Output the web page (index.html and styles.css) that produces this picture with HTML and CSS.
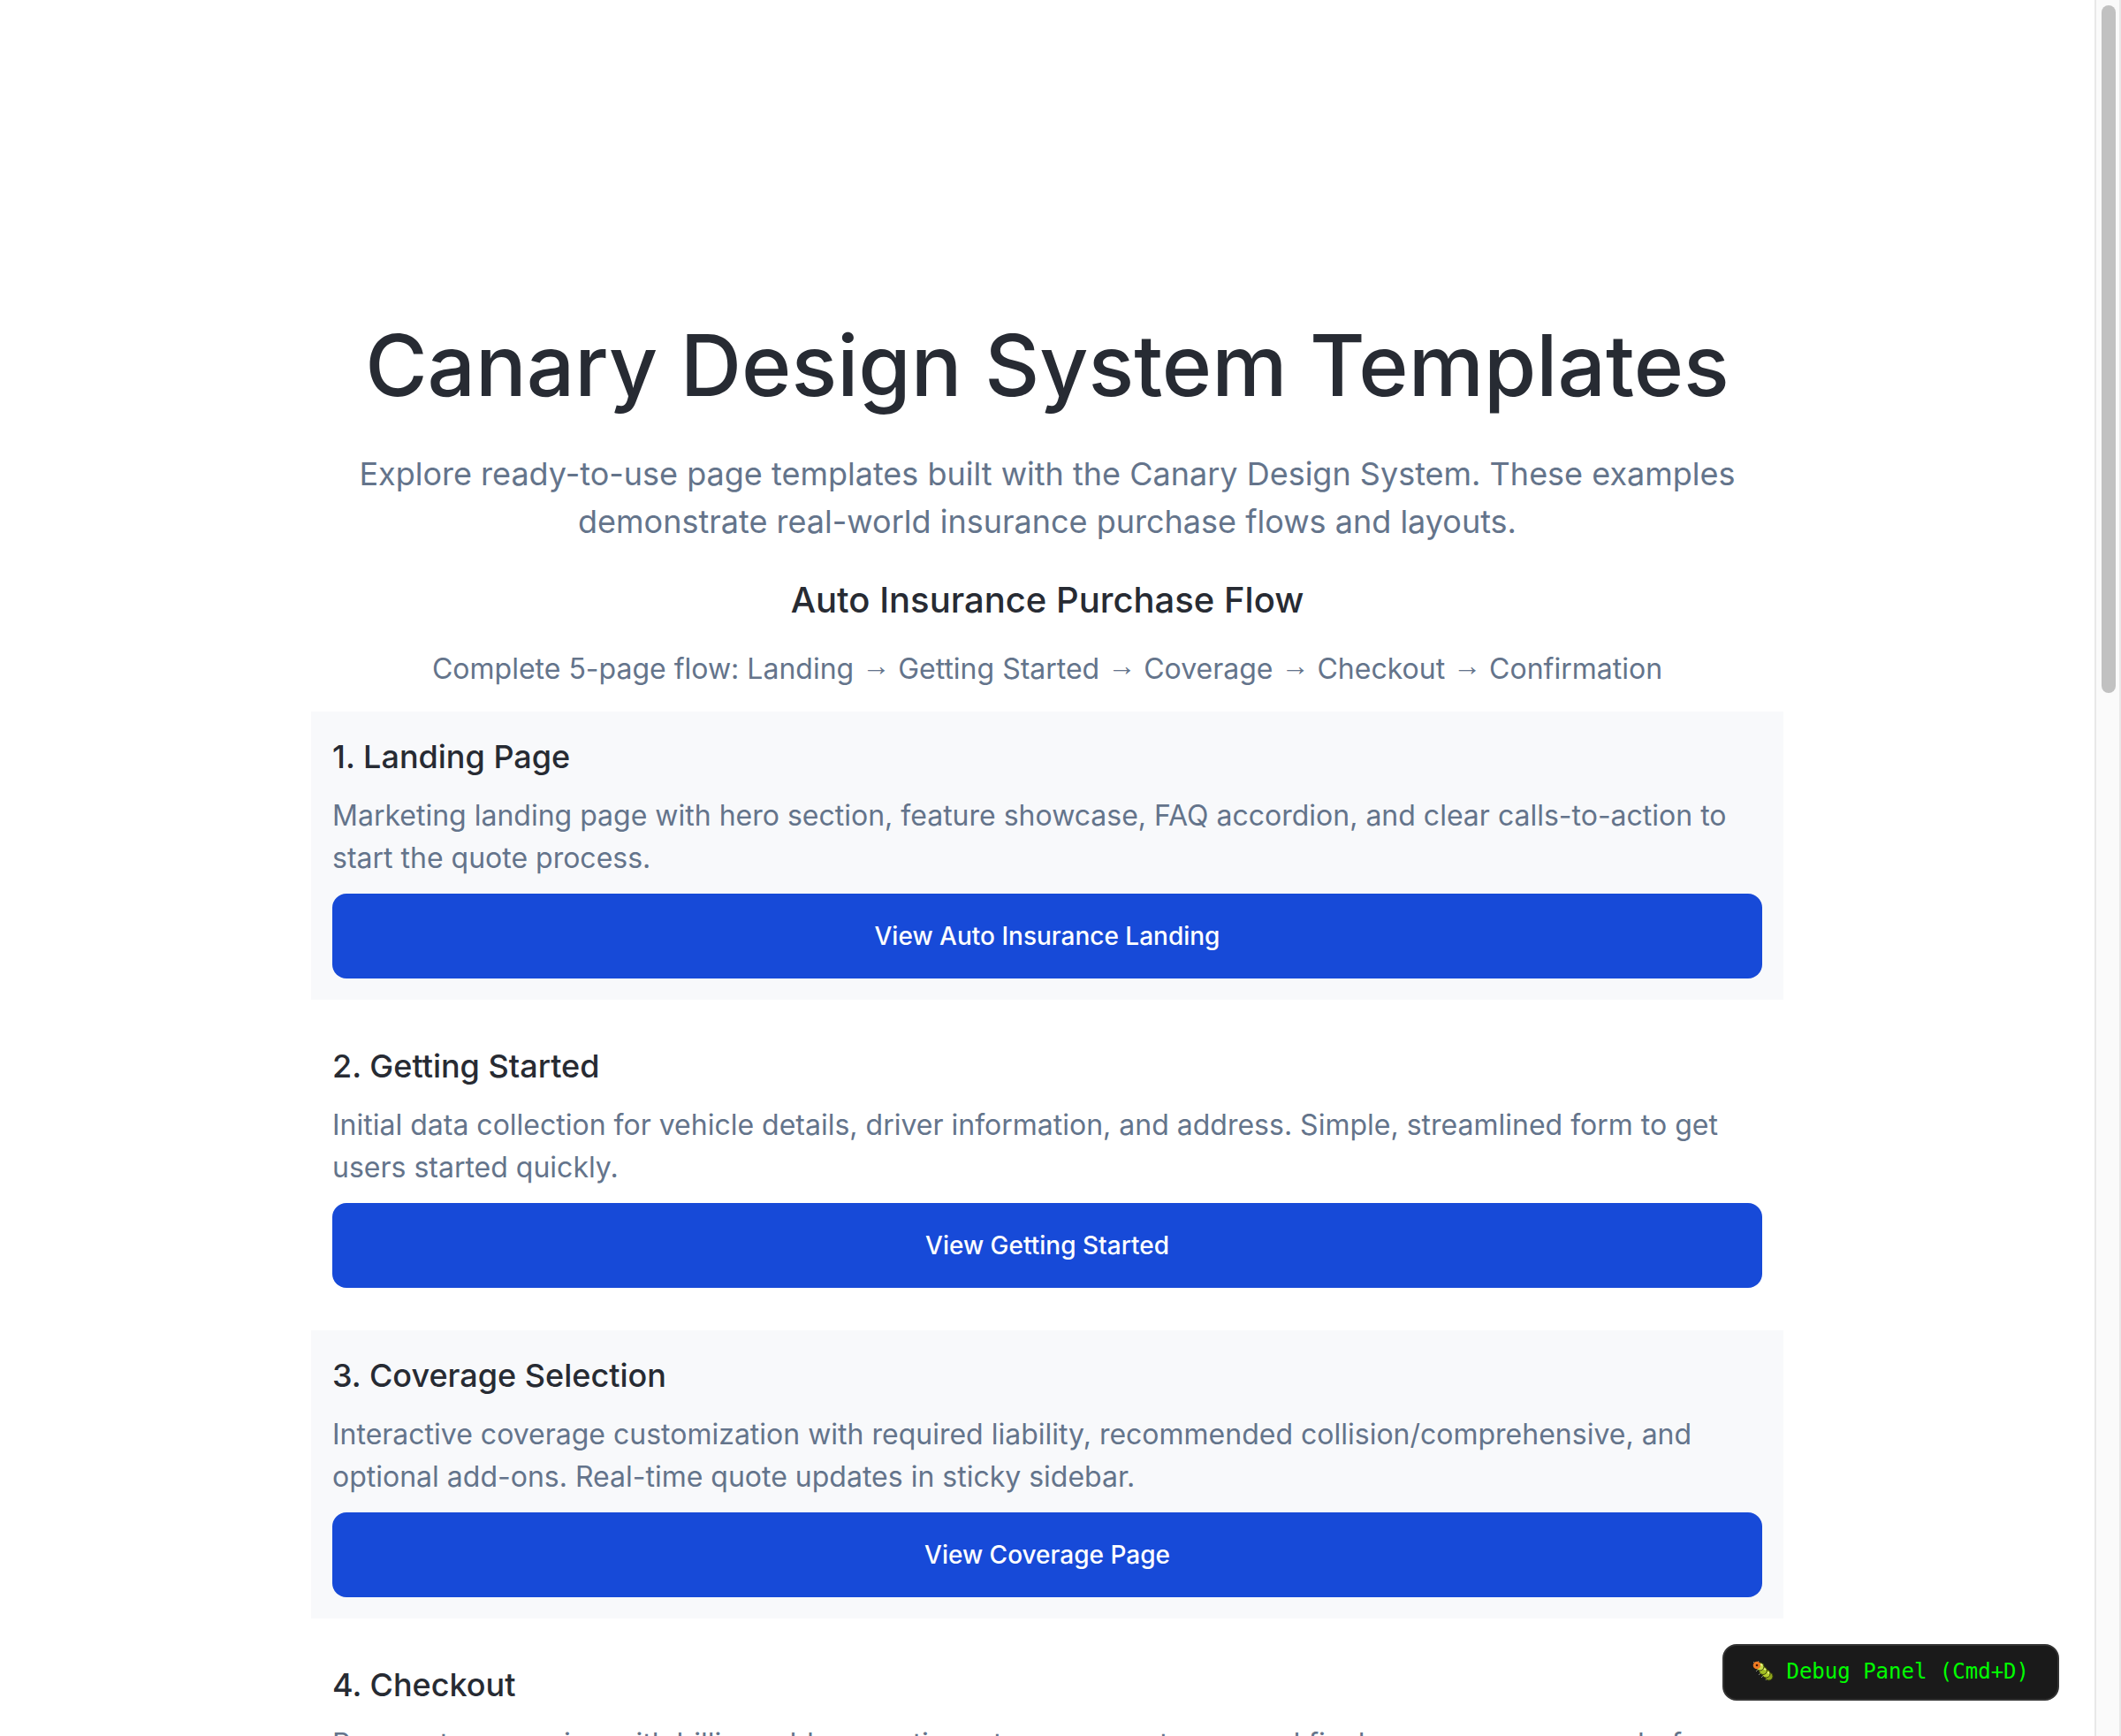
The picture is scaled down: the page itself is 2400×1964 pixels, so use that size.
FILE: index.html
```html
<!DOCTYPE html>
<html lang="en">
<head>
<meta charset="utf-8">
<meta name="viewport" content="width=device-width, initial-scale=1">
<title>Canary Design System Templates</title>
<link rel="stylesheet" href="styles.css">
</head>
<body>
<div class="shell">
  <main class="page">
    <div class="column">
      <header class="hero">
        <h1 class="hero-title">Canary Design System Templates</h1>
        <p class="hero-text">Explore ready-to-use page templates built with the Canary Design System. These examples demonstrate real-world insurance purchase flows and layouts.</p>
      </header>
      <section class="flow">
        <div class="flow-head">
          <h2 class="flow-title">Auto Insurance Purchase Flow</h2>
          <p class="body-text">Complete 5-page flow: Landing <span class="arrow">→</span> Getting Started <span class="arrow">→</span> Coverage <span class="arrow">→</span> Checkout <span class="arrow">→</span> Confirmation</p>
        </div>
        <article class="card card-tinted">
          <h3 class="card-title">1. Landing Page</h3>
          <p class="body-text">Marketing landing page with hero section, feature showcase, FAQ accordion, and clear calls-to-action to start the quote process.</p>
          <button class="action" type="button">View Auto Insurance Landing</button>
        </article>
        <article class="card">
          <h3 class="card-title">2. Getting Started</h3>
          <p class="body-text">Initial data collection for vehicle details, driver information, and address. Simple, streamlined form to get users started quickly.</p>
          <button class="action" type="button">View Getting Started</button>
        </article>
        <article class="card card-tinted">
          <h3 class="card-title">3. Coverage Selection</h3>
          <p class="body-text">Interactive coverage customization with required liability, recommended collision/comprehensive, and optional add-ons. Real-time quote updates in sticky sidebar.</p>
          <button class="action" type="button">View Coverage Page</button>
        </article>
        <article class="card">
          <h3 class="card-title">4. Checkout</h3>
          <p class="body-text">Payment processing with billing address options, terms acceptance, and final coverage summary before purchase.</p>
          <button class="action" type="button">View Checkout</button>
        </article>
      </section>
    </div>
    <button class="debug" type="button">
      <svg class="bug" viewBox="0 0 24 24" aria-hidden="true">
        <g stroke="#8b8f80" stroke-width="1"><path d="M3 3 1 1M6 2 7 0M6 10l-2 2M9 14l-2 2M12 17l-2 2M16 20l-1 2"/></g>
        <ellipse cx="18.500" cy="17.500" rx="4.500" ry="4.500" fill="#8fa51b" stroke="#39420c"/>
        <ellipse cx="15.500" cy="14.500" rx="4.500" ry="4.500" fill="#b5ce2c" stroke="#39420c"/>
        <ellipse cx="12" cy="11" rx="4.500" ry="4.500" fill="#a2bd24" stroke="#39420c"/>
        <ellipse cx="8.500" cy="6.500" rx="4.500" ry="4.500" fill="#c5dc47" stroke="#39420c"/>
        <circle cx="5" cy="5" r="4.300" fill="#ee7b22"/>
        <circle cx="5" cy="5" r="1.300" fill="#431708"/>
        <path d="M9 4l2 1M13 9l2 1M17 13l2 1" stroke="#e9f58c" stroke-width="1.500"/>
      </svg>
      <span>Debug Panel (Cmd+D)</span>
    </button>
  </main>
  <div class="track" aria-hidden="true"><div class="thumb"></div></div>
</div>
</body>
</html>
```

FILE: styles.css
```css
* { box-sizing: border-box; }

body {
  margin: 0;
  background: #fff;
  color: #272b33;
  font-family: Inter, "Liberation Sans", sans-serif;
}

h1, h2, h3, p { margin: 0; font-weight: 500; }

.shell {
  display: flex;
  height: 100vh;
  overflow: hidden;
}

.page {
  position: relative;
  flex: 1;
  min-width: 0;
  overflow: hidden;
}

.column {
  display: flex;
  flex-direction: column;
  gap: 32px;
  max-width: 1666px;
  margin: 0 auto;
  padding: 341px 0 96px;
}

.hero {
  display: flex;
  flex-direction: column;
  gap: 24px;
  text-align: center;
}

.hero-title { font-size: 96px; line-height: 144px; }

.hero-text {
  color: #64748b;
  font-size: 36px;
  font-weight: 400;
  line-height: 54px;
}

.flow, .flow-head {
  display: flex;
  flex-direction: column;
  gap: 24px;
}

.flow-head { text-align: center; }

.flow-title { font-size: 40px; line-height: 60px; }

.body-text {
  color: #64748b;
  font-size: 32px;
  font-weight: 400;
  line-height: 48px;
}

.arrow {
  font-family: "Liberation Sans", sans-serif;
  font-weight: 700;
  line-height: 1;
  vertical-align: 4px;
}

.card {
  display: flex;
  flex-direction: column;
  gap: 16px;
  padding: 24px;
}

.card-tinted { background: #f8f9fb; }

.card-title { font-size: 36px; line-height: 54px; }

.action {
  height: 96px;
  border: 0;
  border-radius: 16px;
  background: #174ad8;
  color: #fff;
  font: 500 28px/40px Inter, "Liberation Sans", sans-serif;
  cursor: pointer;
}

.debug {
  position: absolute;
  right: 40px;
  bottom: 40px;
  display: flex;
  align-items: center;
  gap: 14px;
  height: 64px;
  padding: 0 32px 2px;
  border: 2px solid #333;
  border-radius: 16px;
  background: #1a1a1a;
  color: #0f0;
  font: 24px/28px "DejaVu Sans Mono", monospace;
  cursor: pointer;
}

.bug { width: 24px; height: 24px; fill: none; }

.track {
  width: 30px;
  padding: 6px 4px 6px 6px;
  border: solid #e8e8e8;
  border-width: 0 2px;
  background: #fafafa;
}

.thumb {
  width: 16px;
  height: 778px;
  border-radius: 8px;
  background: #c1c1c1;
}
```
